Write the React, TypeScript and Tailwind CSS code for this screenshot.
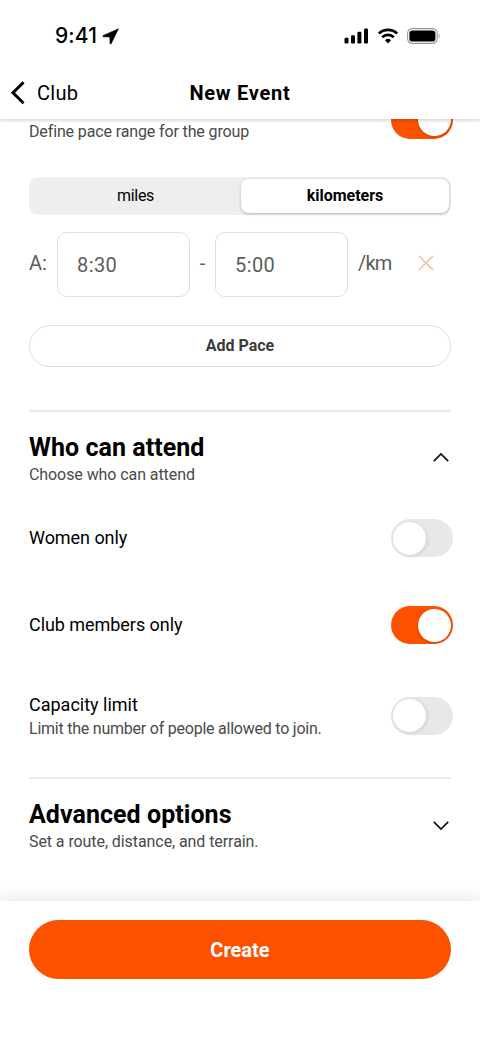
// new club event form - pace groups, attendance rules and the sticky create button

import type { ReactNode } from 'react';
import { clsx } from 'clsx';

function Chevron({ up = false }: { up?: boolean }) {
  return (
    <svg width="18" height="12" viewBox="0 0 18 12" fill="none" stroke="#111" strokeWidth="1.7" className="mr-px shrink-0">
      <path d={up ? 'M1.8 9.2 9 2l7.2 7.2' : 'M1.8 2.8 9 10l7.2-7.2'} />
    </svg>
  );
}

function Toggle({ on = false }: { on?: boolean }) {
  return (
    <div className={clsx('-mr-[2px] flex h-[38px] w-[62px] shrink-0 items-center rounded-full px-[2px]', on ? 'justify-end bg-[#fc5200]' : 'bg-[#e8e8e8]')}>
      <div className={clsx('h-[33px] w-[33px] rounded-full bg-white', on ? 'shadow-[0_1px_3px_rgba(0,0,0,0.2)]' : 'shadow-[1px_1px_4px_rgba(0,0,0,0.12)]')} />
    </div>
  );
}

function StatusBar() {
  return (
    <div className="flex h-[66px] items-start justify-between pt-[24px] pl-[55px] pr-[40px] font-['Inter',sans-serif]">
      <div className="flex items-center gap-[5px]">
        <span className="w-[42px] text-[21px] leading-6 font-medium tracking-[0.1px]">9:41</span>
        <svg width="17" height="17" viewBox="0 0 17 17">
          <path d="M15.9.9 1.2 7.5c-.7.4-.6 1.2.2 1.3l6 .3c.3 0 .4.2.4.4l.2 5.9c.1.8 1 .9 1.3.2L16.3 1.3c.1-.3-.1-.5-.4-.4z" stroke="#000" strokeWidth=".5" />
        </svg>
      </div>
      <div className="flex h-6 items-center gap-[9px]">
        <svg width="25" height="16" viewBox="0 0 25 16">
          <rect x=".5" y="9.8" width="4" height="5.7" rx="1.3" />
          <rect x="7" y="7.2" width="4" height="8.3" rx="1.3" />
          <rect x="13.4" y="3.8" width="4" height="11.7" rx="1.3" />
          <rect x="20" y=".5" width="4" height="15" rx="1.3" />
        </svg>
        <svg width="20" height="16" viewBox="0 0 20 16" fill="none" stroke="#000" strokeWidth="2.7">
          <path d="M.9 5.6a13 13 0 0 1 18.2 0" />
          <path d="M4.2 9.3a8.3 8.3 0 0 1 11.6 0" />
          <path d="M7 12.2a4.4 4.4 0 0 1 6 0L10 15.4z" fill="#000" stroke="none" />
        </svg>
        <svg width="33" height="16" viewBox="0 0 33 16">
          <rect x=".6" y=".6" width="29.6" height="14.8" rx="4.8" fill="none" stroke="#999" strokeWidth="1.1" />
          <rect x="2.4" y="2.4" width="26" height="11.2" rx="3.2" />
          <path d="M31.6 5.6c1.3.6 1.3 4.2 0 4.8z" fill="#999" />
        </svg>
      </div>
    </div>
  );
}

function SectionHeader({ title, subtitle, open }: { title: string; subtitle: ReactNode; open?: boolean }) {
  return (
    <div className="flex items-center justify-between border-t-2 border-[#e8e8e8] pt-[19px]">
      <div>
        <h2 className="h-8 pt-px text-[25px] leading-8 font-bold tracking-[0.05px]">{title}</h2>
        <p className="mt-px h-5 pt-px text-base leading-5 tracking-[-0.08px] text-[#4a4a4a]">{subtitle}</p>
      </div>
      <Chevron up={open} />
    </div>
  );
}

export default function App() {
  return (
    <div className="flex h-[1040px] w-[480px] flex-col overflow-hidden bg-white font-['Roboto',sans-serif] text-black">
      <header className="relative z-10 h-[119px] shrink-0 bg-white shadow-[0_1px_4px_rgba(0,0,0,0.22)]">
        <StatusBar />
        <div className="grid h-[53px] grid-cols-3 items-center pl-[10px] pr-[10px]">
          <div className="flex items-center gap-3">
            <svg width="15" height="24" viewBox="0 0 15 24" fill="none" stroke="#000" strokeWidth="3">
              <path d="M13.6 1.2 3 11.7l10.6 10.5" />
            </svg>
            <span className="text-[20px] leading-6 tracking-[0.25px]">Club</span>
          </div>
          <h1 className="text-center text-[20px] leading-6 font-bold tracking-[0.75px] whitespace-nowrap">New Event</h1>
        </div>
      </header>

      <main className="flex-1 overflow-hidden px-[29px]">
        {/* pace groups, scrolled partly under the header */}
        <div className="-mt-[18.5px] flex h-[41px] items-start justify-between">
          <p className="self-end text-base leading-5 tracking-[-0.13px] text-[#4a4a4a]">Define pace range for the group</p>
          <Toggle on />
        </div>

        <div className="mt-[35.5px] grid h-[38px] grid-cols-2 rounded-[9px] bg-[#eee] p-[2px] text-base">
          <div className="flex items-center justify-center tracking-[-0.3px]">miles</div>
          <div className="ml-px flex items-center justify-center rounded-lg bg-white font-bold shadow-[0_1px_3px_rgba(0,0,0,0.25)]">kilometers</div>
        </div>

        <div className="mt-[17px] flex h-[65px] items-center text-[20px] text-[#5c5c5c]">
          <span className="w-7 pb-[3px]">A:</span>
          <div className="flex h-full w-[133px] items-center rounded-[10px] border border-[#dedede] pl-[19px] tracking-[0.4px]">8:30</div>
          <span className="w-[25px] pb-[3px] text-center">-</span>
          <div className="flex h-full w-[133px] items-center rounded-[10px] border border-[#dedede] pl-[19px] tracking-[0.4px]">5:00</div>
          <span className="ml-[10px] w-[60px] pb-[3px] tracking-[-0.8px]">/km</span>
          <svg width="16" height="16" viewBox="0 0 16 16" stroke="#f5bd9d" strokeWidth="1.5" className="mb-[3px]">
            <path d="m1 1 14 14M15 1 1 15" />
          </svg>
        </div>

        <button className="mt-7 flex h-[42px] w-full items-center justify-center rounded-full border border-[#dedede] text-base font-bold text-[#3c3c3c]">
          Add Pace
        </button>

        <section className="mt-[43px]">
          <SectionHeader title="Who can attend" subtitle="Choose who can attend" open />
          <div className="mt-[35px] flex items-center justify-between">
            <span className="text-lg leading-6 tracking-[-0.05px]">Women only</span>
            <Toggle />
          </div>
          <div className="mt-[49px] flex items-center justify-between">
            <span className="text-lg leading-6 tracking-[-0.05px]">Club members only</span>
            <Toggle on />
          </div>
          <div className="mt-[49px] flex items-center justify-between">
            <div>
              <p className="text-lg leading-6">Capacity limit</p>
              <p className="mt-px h-5 pt-px text-base leading-5 tracking-[-0.23px] text-[#4a4a4a]">Limit the number of people allowed to join.</p>
            </div>
            <Toggle />
          </div>
        </section>

        <section className="mt-[39px]">
          <SectionHeader title="Advanced options" subtitle="Set a route, distance, and terrain." />
        </section>
      </main>

      <footer className="relative h-[139px] shrink-0 bg-white px-[29px] pt-[19px] shadow-[0_0_20px_rgba(0,0,0,0.13)]">
        <button className="flex h-[59px] w-full items-center justify-center rounded-full bg-[#fc5200] text-[20px] font-bold text-white">
          Create
        </button>
      </footer>
    </div>
  );
}
